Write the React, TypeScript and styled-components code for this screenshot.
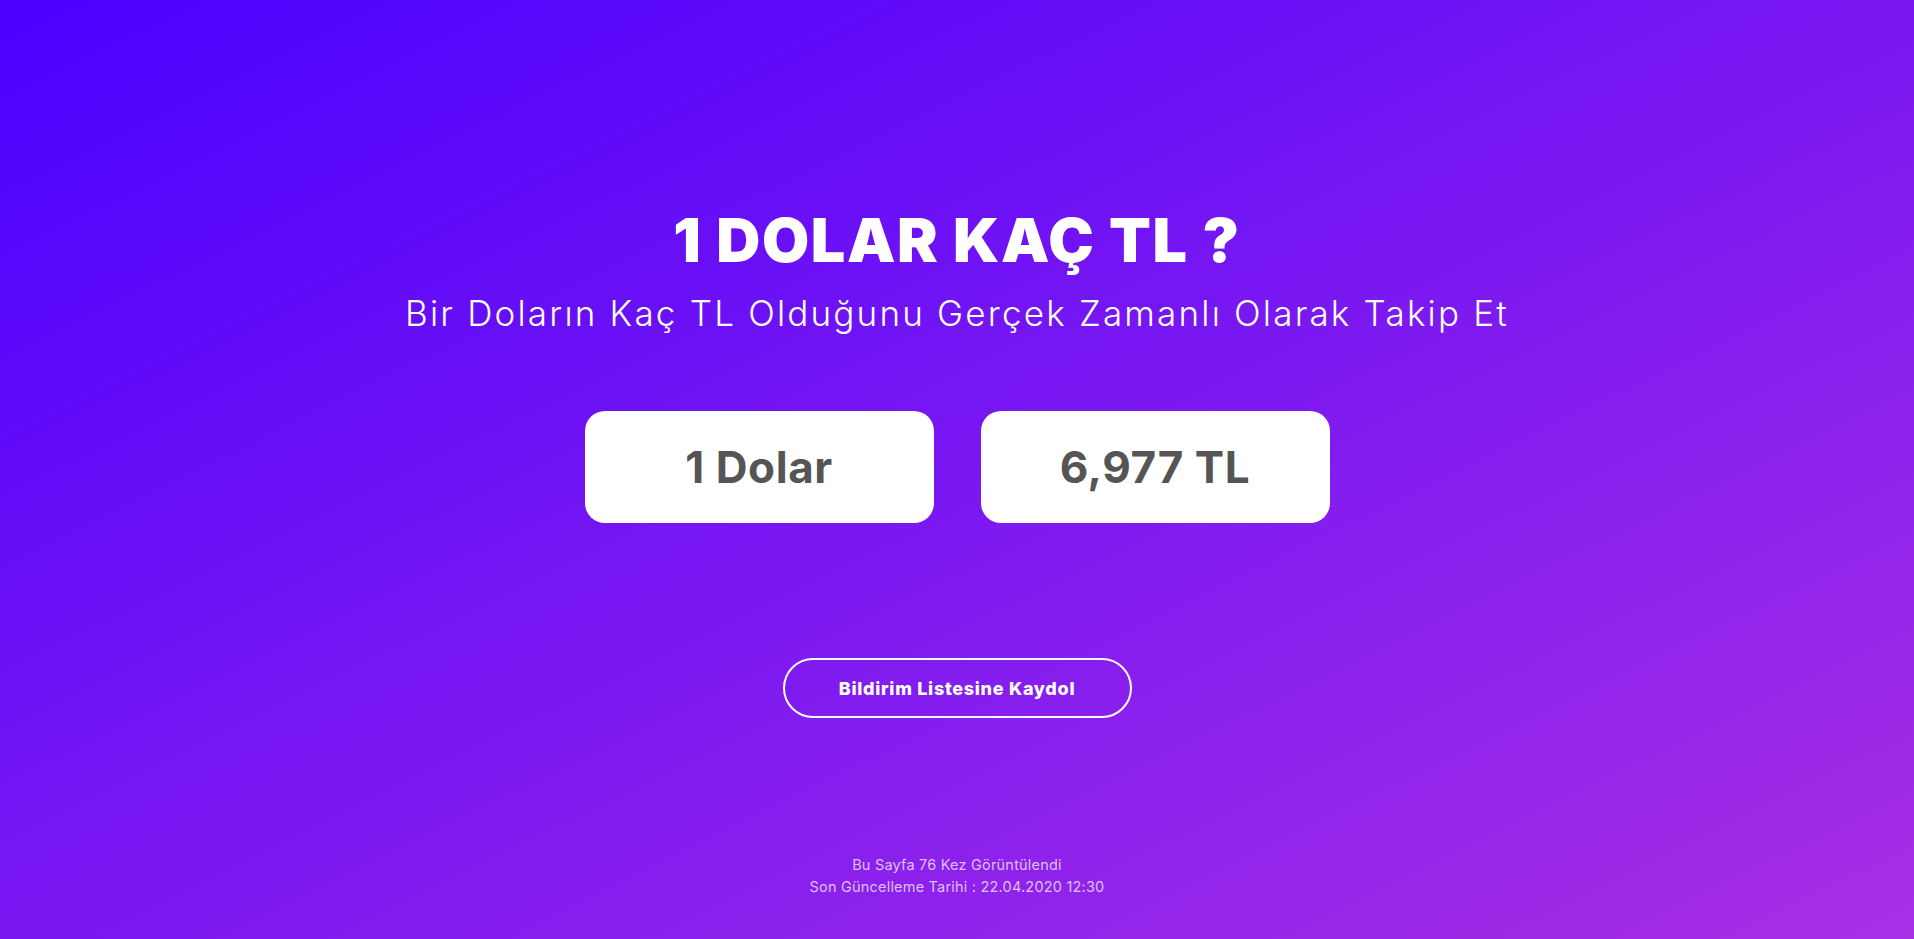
import React from "react";
import styled, { createGlobalStyle } from "styled-components";

const GlobalStyle = createGlobalStyle`
  html, body {
    margin: 0;
    padding: 0;
  }
  body {
    font-family: Inter, "Noto Sans", sans-serif;
    background: linear-gradient(to bottom right, #4a00ff, #a82fe4);
    min-height: 939px;
  }
`;

const Page = styled.main`
  min-height: 939px;
  display: flex;
  flex-direction: column;
  align-items: center;
  color: #fff;
  padding-top: 204px;
  box-sizing: border-box;
`;

const Title = styled.h1`
  margin: 0;
  font-size: 61px;
  line-height: 72px;
  font-weight: 900;
  letter-spacing: 1.6px;
`;

const Subtitle = styled.p`
  margin: 17px 0 0;
  font-size: 35px;
  line-height: 41px;
  font-weight: 300;
  letter-spacing: 2.2px;
`;

const Cards = styled.div`
  margin-top: 77px;
  display: flex;
  gap: 47px;
`;

const Card = styled.div`
  width: 349px;
  height: 112px;
  background: #fff;
  border-radius: 20px;
  display: flex;
  align-items: center;
  justify-content: center;
  color: #555;
  font-size: 44px;
  font-weight: 700;
  letter-spacing: 0.6px;
`;

const SubscribeButton = styled.button`
  margin-top: 135px;
  width: 349px;
  height: 60px;
  box-sizing: border-box;
  background: transparent;
  border: 2.5px solid #fff;
  border-radius: 30px;
  color: #fff;
  font-family: Inter, "Noto Sans", sans-serif;
  font-size: 18px;
  font-weight: 800;
  letter-spacing: 0.7px;
  cursor: pointer;
`;

const Footer = styled.footer`
  margin-top: 136px;
  text-align: center;
  font-size: 14.5px;
  line-height: 22px;
  letter-spacing: 0.2px;
  color: rgba(255, 255, 255, 0.72);
`;

export default function App() {
  return (
    <>
      <GlobalStyle />
      <Page>
        <Title>1 DOLAR KAÇ TL ?</Title>
        <Subtitle>Bir Doların Kaç TL Olduğunu Gerçek Zamanlı Olarak Takip Et</Subtitle>
        <Cards>
          <Card>1 Dolar</Card>
          <Card>6,977 TL</Card>
        </Cards>
        <SubscribeButton>Bildirim Listesine Kaydol</SubscribeButton>
        <Footer>
          Bu Sayfa 76 Kez Görüntülendi
          <br />
          Son Güncelleme Tarihi : 22.04.2020 12:30
        </Footer>
      </Page>
    </>
  );
}
